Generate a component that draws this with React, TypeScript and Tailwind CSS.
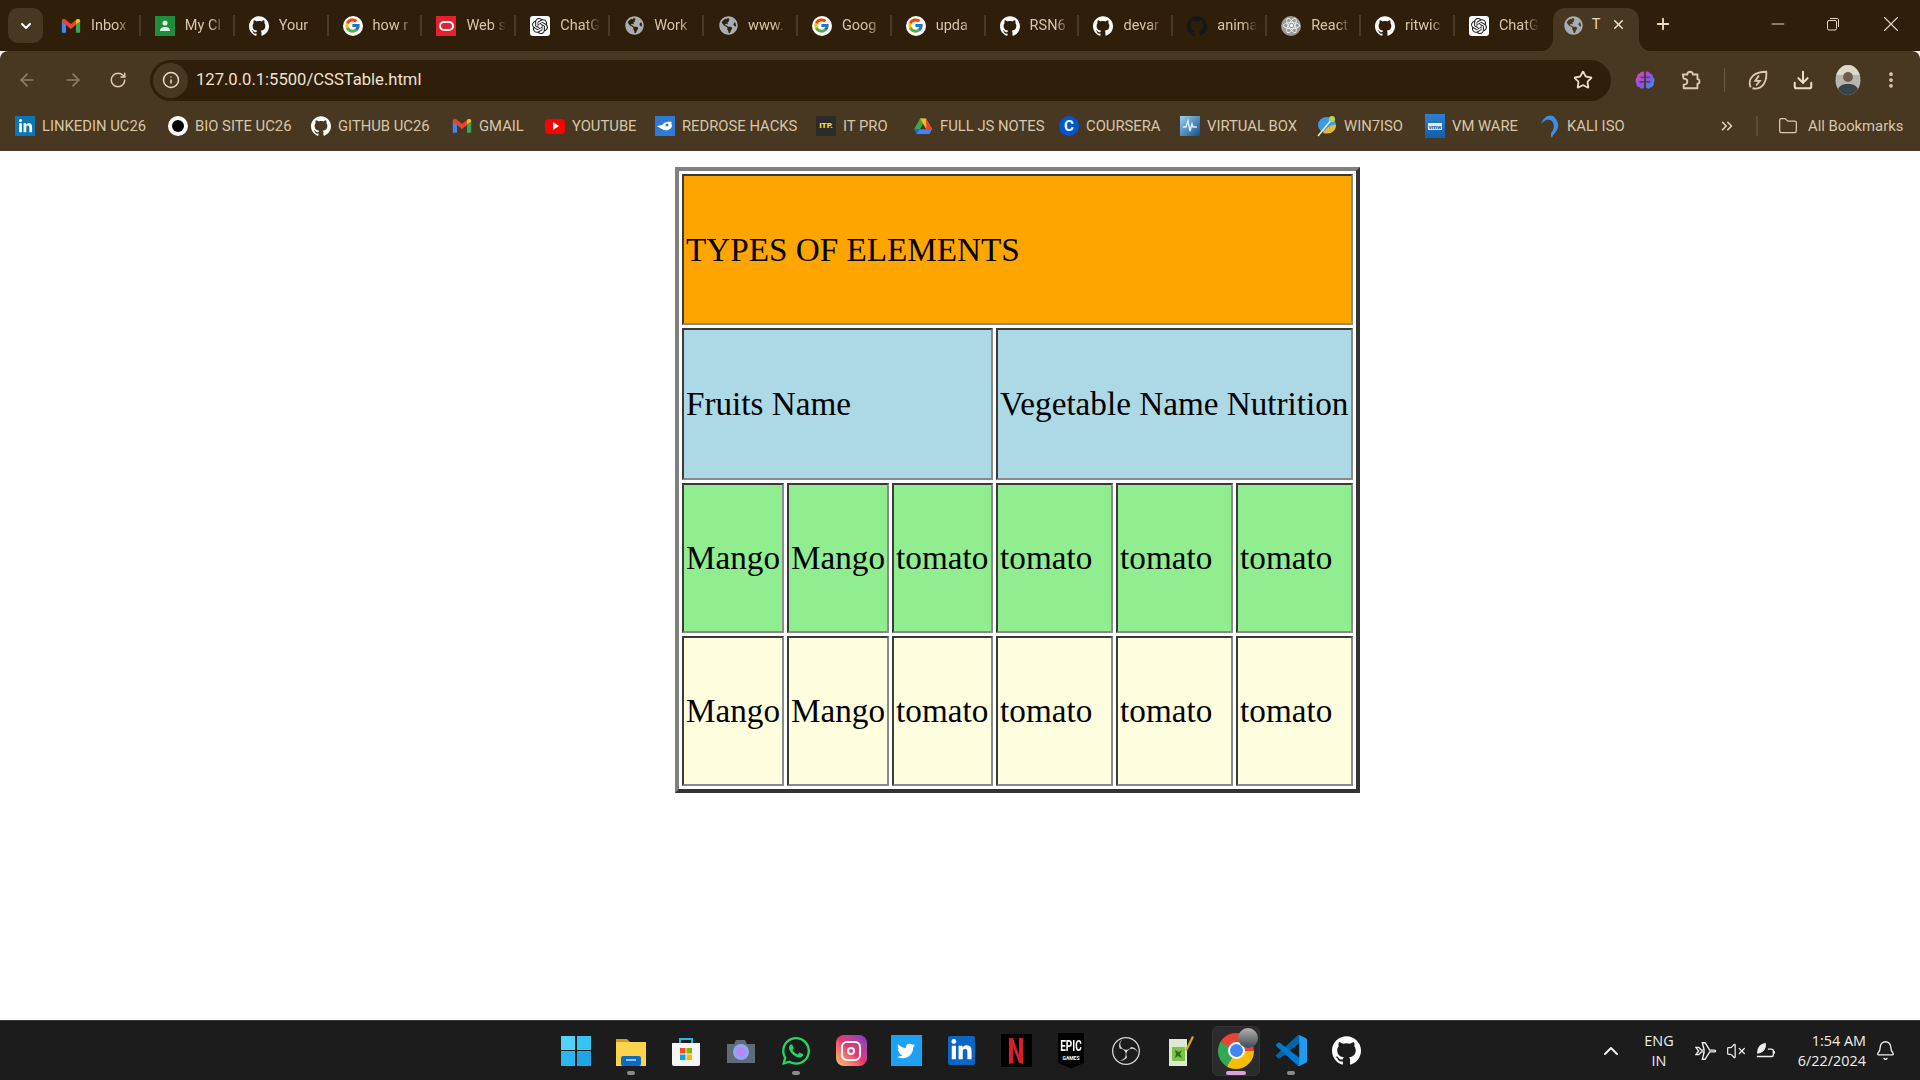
import { ReactNode } from 'react'
import { ArrowLeft, ArrowRight, Bell, ChevronDown, ChevronUp, ChevronsRight, Download, EllipsisVertical, Folder, Info, Minus, Plus, RotateCw, Star, VolumeX, X } from 'lucide-react'
import { FaGlobeAmericas, FaLinkedinIn, FaReact, FaTwitter, FaWhatsapp } from 'react-icons/fa'
import { FcGoogle } from 'react-icons/fc'
import { SiGithub, SiObsstudio, SiOpenai } from 'react-icons/si'

const Gmail = ({ size = 20 }: { size?: number }) => (
  <svg width={size} height={size} viewBox="0 0 24 24">
    <path d="M1 6.500V20h5V10z" fill="#4285F4" />
    <path d="M23 6.500V20h-5V10z" fill="#34A853" />
    <path d="M1 7V5.500C1 3.500 3.500 3 5 4l7 5.500L19 4v6l-7 5.500L1 7z" fill="#EA4335" />
    <path d="M18 4.600C20 3 23 3.500 23 6v1l-5 3z" fill="#FBBC04" />
  </svg>
)

const Classroom = () => (
  <span className="flex h-5 w-5 items-center justify-center bg-[#1e8e3e]">
    <svg width="14" height="14" viewBox="0 0 14 14" fill="#e8f5e9">
      <circle cx="7" cy="4" r="2.500" />
      <path d="M2 12c0-3 2-4 5-4s5 1 5 4z" />
    </svg>
  </span>
)

const Git = ({ className = 'text-white' }: { className?: string }) => (
  <span className={`flex h-5 w-5 items-center justify-center rounded-full ${className}`}>
    <SiGithub size={20} />
  </span>
)

const Google = () => (
  <span className="flex h-5 w-5 items-center justify-center rounded-full bg-white">
    <FcGoogle size={17} />
  </span>
)

const Opera = () => (
  <span className="flex h-5 w-5 items-center justify-center bg-[#e8202c]">
    <span className="h-[10px] w-[15px] rounded-[5px] border-2 border-white" />
  </span>
)

const Openai = () => (
  <span className="flex h-5 w-5 items-center justify-center rounded-[3px] bg-white text-[#222]">
    <SiOpenai size={16} />
  </span>
)

const Globe = () => (
  <span className="flex h-5 w-5 items-center justify-center rounded-full text-[#a9adb2]">
    <FaGlobeAmericas size={19} />
  </span>
)

const ReactTab = () => (
  <span className="flex h-5 w-5 items-center justify-center rounded-full bg-[#9b9b9b] text-white">
    <FaReact size={17} />
  </span>
)

const Drive = () => (
  <svg width="20" height="20" viewBox="0 0 24 24">
    <path d="M8.500 3h7l-7 12.500H1.500z" fill="#34A853" />
    <path d="M8.500 3h7l7.500 13h-7z" fill="#FBBC04" />
    <path d="M8 16h15l-3.500 5.500h-15L1.500 16z" fill="#4285F4" />
    <path d="M1.500 16H8l-3.500 5.500z" fill="#1967D2" />
    <path d="M15.500 3l7.500 13h-7z" fill="#EA4335" />
  </svg>
)

const tabs: { icon: ReactNode; label: string }[] = [
  { icon: <Gmail />, label: 'Inbox' },
  { icon: <Classroom />, label: 'My Cl' },
  { icon: <Git />, label: 'Your' },
  { icon: <Google />, label: 'how r' },
  { icon: <Opera />, label: 'Web s' },
  { icon: <Openai />, label: 'ChatG' },
  { icon: <Globe />, label: 'Work' },
  { icon: <Globe />, label: 'www.' },
  { icon: <Google />, label: 'Goog' },
  { icon: <Google />, label: 'upda' },
  { icon: <Git />, label: 'RSN6' },
  { icon: <Git />, label: 'devar' },
  { icon: <Git className="text-[#14181c]" />, label: 'anima' },
  { icon: <ReactTab />, label: 'React' },
  { icon: <Git />, label: 'ritwic' },
  { icon: <Openai />, label: 'ChatG' },
]

const bookmarks: { icon: ReactNode; label: string; cls: string }[] = [
  { cls: 'w-[153px]', label: 'LINKEDIN UC26', icon: <span className="flex h-5 w-5 items-center justify-center bg-[#0a76b4] text-white"><FaLinkedinIn size={15} /></span> },
  { cls: 'w-[143px]', label: 'BIO SITE UC26', icon: <span className="flex h-5 w-5 items-center justify-center rounded-full bg-white"><span className="h-3 w-3 rounded-full bg-black" /></span> },
  { cls: 'w-[141px]', label: 'GITHUB UC26', icon: <Git /> },
  { cls: 'w-[93px]', label: 'GMAIL', icon: <Gmail /> },
  { cls: 'w-[110px]', label: 'YOUTUBE', icon: <span className="flex h-[15px] w-5 items-center justify-center rounded-[4px] bg-[#f00]"><span className="ml-[1px] h-0 w-0 border-y-[4px] border-l-[6px] border-y-transparent border-l-white" /></span> },
  { cls: 'w-[161px]', label: 'REDROSE HACKS', icon: <span className="flex h-5 w-5 items-center justify-center bg-[#2f7ad6]"><svg width="16" height="12" viewBox="0 0 16 12" fill="#fff"><path d="M0 6l5-1c2-3 6-4 10-3-1 1-1 2 0 3 0 4-4 6-8 5L3 8z" /><circle cx="10" cy="5" r="1.500" fill="#2f7ad6" /></svg></span> },
  { cls: 'w-[97px]', label: 'IT PRO', icon: <span className="flex h-5 w-5 items-center justify-center bg-[#2b2b2b] text-[8px] font-black text-[#ffe600]">ITP.</span> },
  { cls: 'w-[146px]', label: 'FULL JS NOTES', icon: <Drive /> },
  { cls: 'w-[121px]', label: 'COURSERA', icon: <span className="flex h-5 w-5 items-center justify-center rounded-full bg-[#0056d2] text-[15px] font-bold leading-none text-white">C</span> },
  { cls: 'w-[137px]', label: 'VIRTUAL BOX', icon: <span className="flex h-5 w-5 items-center justify-center bg-gradient-to-br from-[#9fd3ef] to-[#0a4f8f]"><svg width="16" height="16" viewBox="0 0 16 16" fill="none" stroke="#d8f0ff" strokeWidth="1.500"><path d="M1 9h3l2-6 2 10 2-7 1 3h4" /></svg></span> },
  { cls: 'w-[108px]', label: 'WIN7ISO', icon: <svg width="20" height="22" viewBox="0 0 20 22"><ellipse cx="10" cy="10" rx="9" ry="8" fill="#3f9ae6" /><path d="M6 18c8 2 13-2 13-8-4-1-9 2-13 8z" fill="#e8b92c" /><path d="M1 21L15 4" stroke="#f0f0e0" strokeWidth="1.500" /><circle cx="15" cy="4" r="3" fill="#b6d94c" /></svg> },
  { cls: 'w-[115px]', label: 'VM WARE', icon: <span className="flex h-6 w-5 items-center justify-center bg-gradient-to-b from-[#2f7fd0] to-[#135ea8]"><span className="bg-white/85 px-[1px] text-[6px] font-bold leading-[7px] text-[#135ea8]">vmw</span></span> },
  { cls: 'w-[100px]', label: 'KALI ISO', icon: <svg width="20" height="24" viewBox="0 0 20 24"><path d="M1 10C3 3 9 0 13 2c4 3 7 9 4 14-1 3-4 4-5 8-2-3-1-5 1-8 2-5 0-9-3-10-4-1-6 1-9 4z" fill="#3a8ee6" /></svg> },
]

const taskbar: { icon: ReactNode; dot?: boolean }[] = [
  { icon: <span className="grid h-[30px] w-[30px] grid-cols-2 gap-[1.500px]"><i className="bg-[#4fd4f7]" /><i className="bg-[#35c5f3]" /><i className="bg-[#2ab6ee]" /><i className="bg-[#1ea5e6]" /></span> },
  { dot: true, icon: <svg width="30" height="30" viewBox="0 0 30 30"><path d="M0 3h11l3 3H0z" fill="#d39a17" /><path d="M0 6h30v24H0z" fill="#fcd34d" /><rect x="5" y="20" width="20" height="10" rx="2" fill="#0f6cbd" /><rect x="10" y="23" width="10" height="2" fill="#83c5f0" /></svg> },
  { icon: <svg width="30" height="30" viewBox="0 0 30 30"><path d="M9 8V3h12v5" fill="none" stroke="#2cb3e8" strokeWidth="2" /><path d="M1 7h28v21a2 2 0 01-2 2H3a2 2 0 01-2-2z" fill="#f5f5f5" /><rect x="9" y="12" width="5.500" height="5.500" fill="#f25022" /><rect x="15.500" y="12" width="5.500" height="5.500" fill="#7fba00" /><rect x="9" y="18.500" width="5.500" height="5.500" fill="#00a4ef" /><rect x="15.500" y="18.500" width="5.500" height="5.500" fill="#ffb900" /></svg> },
  { icon: <svg width="30" height="30" viewBox="0 0 30 30"><path d="M1 8h7l2-4h9l2 4h8v19H1z" fill="#5f6b78" /><circle cx="15" cy="16" r="8" fill="#8ea7f5" /><circle cx="15" cy="16" r="5" fill="#b78af0" /></svg> },
  { dot: true, icon: <FaWhatsapp size={32} className="text-[#25d366]" /> },
  { icon: <span className="flex h-[31px] w-[31px] items-center justify-center rounded-[8px] bg-gradient-to-tr from-[#fdc468] via-[#e8336d] to-[#7b35c9]"><span className="flex h-5 w-5 items-center justify-center rounded-[6px] border-2 border-white"><span className="h-2 w-2 rounded-full border-2 border-white" /></span></span> },
  { icon: <span className="flex h-[31px] w-[31px] items-center justify-center bg-[#1da1f2] text-white"><FaTwitter size={18} /></span> },
  { icon: <span className="flex h-[29px] w-[27px] items-center justify-center rounded-[2px] bg-[#0a66c2] text-white"><FaLinkedinIn size={23} /></span> },
  { icon: <span className="flex h-[33px] w-[31px] items-center justify-center bg-black"><svg width="14" height="26" viewBox="0 0 14 26"><path d="M0 0h4l6 17V0h4v26l-4-1L4 9v16l-4 1z" fill="#d81f26" /></svg></span> },
  { icon: <span className="flex h-[36px] w-[26px] flex-col items-center bg-black pt-[4px] text-white [clip-path:polygon(0_0,100%_0,100%_85%,50%_100%,0_85%)]"><span className="origin-top scale-y-150 text-[10px] font-bold leading-[11px]">EPIC</span><span className="mt-[7px] text-[5px] font-bold leading-[6px]">GAMES</span></span> },
  { icon: <SiObsstudio size={28} className="text-[#d6d6d6]" /> },
  { icon: <svg width="28" height="32" viewBox="0 0 28 32"><path d="M2 4h18v27H2z" fill="#dfe8d2" /><path d="M5 12h13v14H5z" fill="#7fc24a" /><path d="M8 15l4 2 3-2-2 4 2 4-4-2-3 2 1-4z" fill="#2f6d1f" /><path d="M25 1l2 1-7 14-2-1z" fill="#d9a520" /></svg> },
  { icon: null },
  { dot: true, icon: <svg width="31" height="31" viewBox="0 0 100 100"><path d="M96.460 10.800L75.860.870a6.230 6.230 0 00-7.100 1.200L1.330 63.600a4.170 4.170 0 000 6.160l5.500 5a4.170 4.170 0 005.320.240L93.400 13.300c2.730-2.070 6.600-.120 6.600 3.300v-.240a6.250 6.250 0 00-3.540-5.630z" fill="#0065a9" /><path d="M96.460 89.200L75.860 99.130a6.230 6.230 0 01-7.100-1.200L1.330 36.400a4.170 4.170 0 010-6.160l5.500-5a4.170 4.170 0 015.320-.240L93.400 86.700c2.730 2.070 6.600.120 6.600-3.300v.240a6.250 6.250 0 01-3.540 5.630z" fill="#007acc" /><path d="M75.860 99.130a6.230 6.230 0 01-7.100-1.200c2.300 2.300 6.240.670 6.240-2.600V4.670c0-3.270-3.940-4.900-6.250-2.600a6.230 6.230 0 017.100-1.200l20.600 9.900A6.250 6.250 0 01100 16.400v67.200a6.250 6.250 0 01-3.540 5.630z" fill="#1f9cf0" /></svg> },
  { icon: <span className="flex h-[30px] w-[30px] items-center justify-center rounded-full text-white"><SiGithub size={29} /></span> },
]

const rows = [
  { bg: 'bg-[#90ee90]', h: 'h-[150px]' },
  { bg: 'bg-[#ffffe0]', h: 'h-[150px]' },
]
const cellText = ['Mango', 'Mango', 'tomato', 'tomato', 'tomato', 'tomato']
const cell = 'border-2 border-t-[#3a3a3a] border-l-[#3a3a3a] border-r-[#8a8a8a] border-b-[#8a8a8a] p-0.5 text-left font-normal whitespace-nowrap'

const Foot = ({ side }: { side: 'l' | 'r' }) => (
  <span className={`absolute bottom-0 h-3 w-3 bg-[#483822] ${side === 'l' ? '-left-3' : '-right-3'}`}>
    <span className={`block h-3 w-3 bg-[#2e1e0a] ${side === 'l' ? 'rounded-br-xl' : 'rounded-bl-xl'}`} />
  </span>
)

export default function App() {
  return (
    <div className="flex h-[1080px] w-[1920px] flex-col overflow-hidden bg-white font-['Roboto',sans-serif]">
      {/* tab strip */}
      <div className="flex h-[51px] shrink-0 items-end bg-[#2e1e0a]">
        <button className="mb-[8px] ml-2 flex h-[35px] w-[35px] items-center justify-center rounded-[10px] bg-[#483822] text-white">
          <ChevronDown size={16} strokeWidth={3} />
        </button>
        <div className="ml-1 flex h-[43px] items-start">
          {tabs.map((t, i) => (
            <div key={i} className="flex h-[35px] w-[93.860px] items-center pl-[14px]">
              <span className="shrink-0">{t.icon}</span>
              <span className="ml-[10px] w-[40px] overflow-hidden whitespace-nowrap text-[14.500px] text-[#d8c6a8] [mask-image:linear-gradient(to_right,black_65%,transparent)]">{t.label}</span>
              {i < 15 && <span className="ml-auto h-[21px] w-[2px] bg-[#4a3a24]" />}
            </div>
          ))}
        </div>
        <div className="relative ml-1 flex h-[43px] w-[86px] items-start rounded-t-xl bg-[#483822] pl-[11px] pt-[7px]">
          <Foot side="l" />
          <Foot side="r" />
          <Globe />
          <span className="ml-2 text-[14.500px] leading-5 text-[#e8d8bc]">T</span>
          <X size={15} strokeWidth={2.500} className="ml-[11px] mt-[2px] text-[#eee0c8]" />
        </div>
        <Plus size={18} strokeWidth={2.500} className="mb-[18px] ml-[15px] text-[#e8d8bc]" />
        <Minus size={20} strokeWidth={1.200} className="mb-[17px] ml-[96px] text-[#e8d8bc]" />
        <svg width="14" height="14" viewBox="0 0 14 14" fill="none" stroke="#e8d8bc" className="mb-5 ml-[38px]"><rect x="1.500" y="3.500" width="9" height="9.500" rx="1.500" /><path d="M4 1.500h7.500a1.500 1.500 0 011 1.500v7" /></svg>
        <X size={26} strokeWidth={1} className="mb-[14px] ml-[38px] text-[#e8d8bc]" />
      </div>

      {/* toolbar + bookmarks */}
      <div className="h-[100px] shrink-0 rounded-t-lg bg-[#483822] text-[#d8c6a8]">
        <div className="flex h-[58px] items-center">
          <ArrowLeft size={20} className="ml-[17px] text-[#8e7e68]" />
          <ArrowRight size={20} className="ml-[26px] text-[#8e7e68]" />
          <RotateCw size={18} className="ml-[26px] text-[#dccab0]" />
          <div className="ml-[23px] flex h-[41px] w-[1461px] items-center rounded-full bg-[#2e1e0a]">
            <span className="ml-[3px] flex h-[35px] w-[35px] items-center justify-center rounded-full bg-[#483822]"><Info size={18} className="text-[#eadcc4]" /></span>
            <span className="ml-[8px] text-[16.600px] text-[#efe3cf]">127.0.0.1:5500/CSSTable.html</span>
            <Star size={20} strokeWidth={2.200} className="ml-auto mr-[18px] text-[#eadcc4]" />
          </div>
          <svg width="22" height="22" viewBox="0 0 24 24" className="ml-[23px]">
            <defs><linearGradient id="br" x1="0" x2="1" y1="0" y2="1"><stop offset="0" stopColor="#f0489c" /><stop offset="0.500" stopColor="#8a50e8" /><stop offset="1" stopColor="#2f9cf0" /></linearGradient></defs>
            <path d="M11 3C9 2 7 3 6.500 5 4 5 3 7 3.500 9 1.500 10 1 13 2.500 15 2 18 4 20 6 20c1 2 4 2 5 0zM13 3c2-1 4 0 4.500 2C20 5 21 7 20.500 9c2 1 2.500 4 1 6 .5 3-1.500 5-3.500 5-1 2-4 2-5 0z" fill="url(#br)" />
            <path d="M11 9H7M11 14H6M13 9h4M13 14h5" stroke="#483822" strokeWidth="1.200" fill="none" />
          </svg>
          <svg width="22" height="22" viewBox="0 0 24 24" fill="none" stroke="#dccab0" strokeWidth="2" strokeLinejoin="round" className="ml-[24px]"><path d="M3 6h5c0-4 6-4 6 0h5v5c3 0 3 5 0 5v5H4v-4c3 0 4-2 4-3.500S7 10.500 4 10.500z" /></svg>
          <span className="ml-[22px] h-[24px] w-[1px] bg-[#6a5a42]" />
          <svg width="22" height="22" viewBox="0 0 24 24" fill="none" stroke="#dccab0" strokeWidth="2" className="ml-[22px]"><path d="M4 20C0 10 8 3 21 3c1 12-5 20-15 18" /><path d="M13 7l-4 6h5l-4 5" /></svg>
          <Download size={22} strokeWidth={2.200} className="ml-[23px] text-[#eadcc4]" />
          <svg width="26" height="30" viewBox="0 0 26 30" className="ml-[21px]"><defs><clipPath id="av"><ellipse cx="13" cy="15" rx="12.500" ry="15" /></clipPath></defs><g clipPath="url(#av)"><rect width="26" height="30" fill="#b9b4ae" /><rect width="26" height="10" fill="#dfd8c8" /><circle cx="13" cy="12" r="5" fill="#6e5a4c" /><path d="M2 30c0-9 5-11 11-11s11 2 11 11z" fill="#36444a" /></g></svg>
          <EllipsisVertical size={20} strokeWidth={2.500} className="ml-[20px] text-[#dccab0]" />
        </div>

        <div className="flex h-[34px] items-center pl-[15px] text-[14.800px]">
          {bookmarks.map((b, i) => (
            <div key={i} className={`flex shrink-0 items-center gap-[7px] ${b.cls}`}>
              {b.icon}
              <span className="whitespace-nowrap">{b.label}</span>
            </div>
          ))}
          <ChevronsRight size={18} strokeWidth={2} className="ml-[78px] text-[#e8d8bc]" />
          <span className="ml-[20px] h-[20px] w-[2px] bg-[#5c4c36]" />
          <Folder size={20} strokeWidth={1.500} className="ml-[20px] text-[#dccab0]" />
          <span className="ml-[10px] whitespace-nowrap">All Bookmarks</span>
        </div>
      </div>

      {/* page */}
      <div className="flex-1 pl-[675px] pt-4">
        <table className="table-fixed border-separate border-spacing-[3px] border-4 border-t-[#808080] border-l-[#808080] border-r-[#333] border-b-[#333] font-['Liberation_Serif',serif] text-[33.200px] leading-none text-black">
          <colgroup>
            <col className="w-[102px]" />
            <col className="w-[102px]" />
            <col className="w-[101px]" />
            <col className="w-[117px]" />
            <col className="w-[117px]" />
            <col className="w-[117px]" />
          </colgroup>
          <tbody>
            <tr className="h-[151px]">
              <td colSpan={6} className={`${cell} bg-[#ffa500]`}>TYPES OF ELEMENTS</td>
            </tr>
            <tr className="h-[152px]">
              <td colSpan={3} className={`${cell} bg-[#add8e6]`}>Fruits Name</td>
              <td colSpan={3} className={`${cell} bg-[#add8e6]`}>Vegetable Name Nutrition</td>
            </tr>
            {rows.map((r, i) => (
              <tr key={i} className={r.h}>
                {cellText.map((c, j) => (
                  <td key={j} className={`${cell} ${r.bg}`}>{c}</td>
                ))}
              </tr>
            ))}
          </tbody>
        </table>
      </div>

      {/* taskbar */}
      <div className="relative flex h-[60px] shrink-0 items-center border-t border-[#3a3a3a] bg-[#1c1c1c] text-white">
        <div className="ml-[548.500px] flex items-center">
          {taskbar.map((t, i) => (
            <div key={i} className="relative flex h-[55px] w-[55px] items-center justify-center">
              {t.icon === null ? (
                <>
                  <span className="absolute h-[50px] w-[48px] rounded-md border border-[#333] bg-[#2b2b2b]" />
                  <span className="relative flex h-[36px] w-[36px] items-center justify-center rounded-full bg-[conic-gradient(#ea4335_0deg_90deg,#fbbc04_90deg_210deg,#34a853_210deg_300deg,#ea4335_300deg)]">
                    <span className="h-[17px] w-[17px] rounded-full border-2 border-white bg-[#4285f4]" />
                  </span>
                  <span className="absolute right-[6px] top-[5px] h-[20px] w-[20px] rounded-full bg-gradient-to-b from-[#b8b4b0] to-[#3e4c52]" />
                  <span className="absolute bottom-[3px] h-[4px] w-[20px] rounded-full bg-[#d8a0e0]" />
                </>
              ) : t.icon}
              {t.dot && <span className="absolute bottom-[3px] h-[4px] w-[8px] rounded-full bg-[#8a8a8a]" />}
            </div>
          ))}
        </div>
        <ChevronUp size={24} strokeWidth={2} className="ml-[225.500px] text-[#eee]" />
        <div className="ml-4 w-[40px] text-center font-['Open_Sans',sans-serif] text-[14.400px] leading-[20px] text-[#eee]">
          <div>ENG</div>
          <div>IN</div>
        </div>
        <svg width="22" height="22" viewBox="0 0 24 24" fill="none" stroke="#eee" strokeWidth="1.500" className="ml-4"><path d="M1 8l3 4-3 4h3l3-3h3l-2 8h3l5-8h5c2 0 2-2 0-2h-5L11 3H8l2 8H7L4 8z" /></svg>
        <VolumeX size={20} strokeWidth={1.500} className="ml-[9px] text-[#eee]" />
        <svg width="22" height="22" viewBox="0 0 24 24" fill="none" stroke="#eee" strokeWidth="1.500" className="ml-[9px]"><path d="M2 18h16a2 2 0 002-2v-4a2 2 0 00-2-2h-4M21 12v3" /><path d="M3 14C3 8 6 5 11 4c1 5-2 9-7 10z" fill="#eee" /></svg>
        <div className="ml-[9px] w-[80px] text-right font-['Open_Sans',sans-serif] text-[14.400px] leading-[20px] text-[#eee]">
          <div>1:54 AM</div>
          <div>6/22/2024</div>
        </div>
        <Bell size={21} strokeWidth={1.500} className="ml-[8.500px] text-[#eee]" />
      </div>
    </div>
  )
}
